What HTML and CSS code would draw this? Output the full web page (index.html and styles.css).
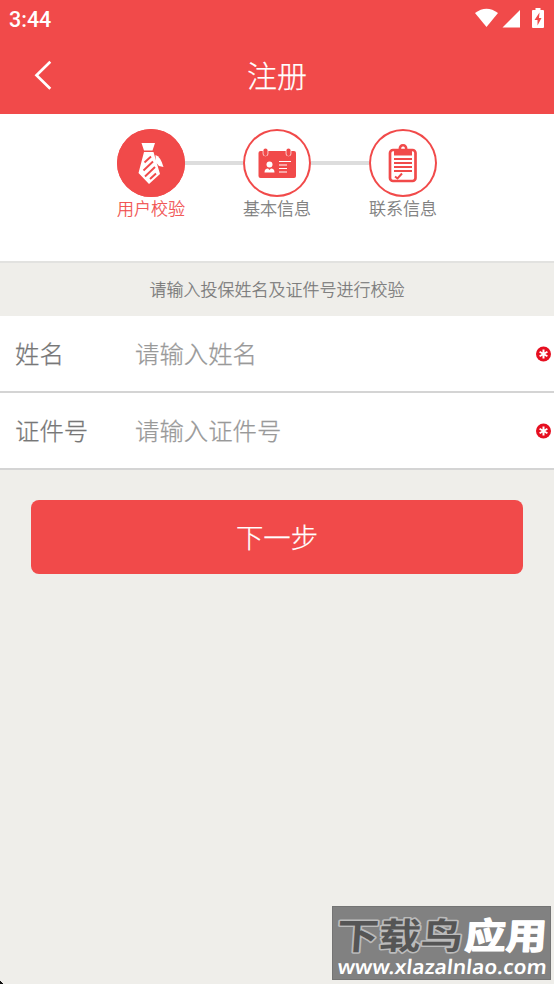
FILE: index.html
```html
<!DOCTYPE html>
<html lang="zh-CN">
<head>
<meta charset="utf-8">
<title>注册</title>
<link rel="stylesheet" href="styles.css">
</head>
<body>
<header class="top">
  <div class="status">
    <span class="clock">3:44</span>
    <svg class="status-icons" width="72" height="22" viewBox="0 0 72 22" fill="#fff">
      <path d="M1 5Q12.500-3.500 24 5L12.500 19Z"/>
      <path d="M46 2V19.500H28.500Z"/>
      <path fill-rule="evenodd" d="M61.500 0h5v2H69q1 0 1 1v16q0 1-1 1H59q-1 0-1-1V3q0-1 1-1h2.500ZM65.500 4.500L60.500 12h3v5.500l4-7.500h-2.500Z"/>
    </svg>
  </div>
  <div class="nav">
    <svg class="back" width="18" height="30" viewBox="0 0 18 30"><path d="M16.300 1.800L2.500 15.300 16.300 28.700" fill="none" stroke="#fff" stroke-width="2.700"/></svg>
    <h1 class="title">注册</h1>
  </div>
</header>
<section class="steps">
  <div class="step active">
    <div class="disc">
      <svg width="68" height="68" viewBox="0 0 68 68">
        <path fill="#fff" d="M24.500 14h13.500l-2.500 7.500h-8.500ZM27 23h9.500l6.500 22-11 10L21.500 44Z"/>
        <path fill="#fff" d="M38.500 26q5 1.500 8 12l-4.500-1-3-3.500Z"/>
        <path d="M27.500 33.500l6.500-6M26.500 41.500l9.500-9M28 47.500l10-9.500M33 50l6-5.500" stroke="#f14a4a" stroke-width="1.900"/>
      </svg>
    </div>
    <span class="caption">用户校验</span>
  </div>
  <div class="link"></div>
  <div class="step">
    <div class="disc">
      <svg width="68" height="68" viewBox="0 0 68 68">
        <rect x="15.500" y="22" width="37.500" height="27" rx="2" fill="#f14a4a"/>
        <path d="M22.500 21v3.500M45.500 21v3.500" stroke="#fff" stroke-width="5.600" stroke-linecap="round"/>
        <path d="M22.500 21.500v3.500M45.500 21.500v3.500" stroke="#f14a4a" stroke-width="4.200" stroke-linecap="round"/>
        <circle cx="26.500" cy="35.500" r="3" fill="#fff"/>
        <path d="M21.500 43.500q0-4 3.500-4l1.500 1.500 1.500-1.500q3.500 0 3.500 4Z" fill="#fff"/>
        <path d="M36 32.500h12M36 36h8M36 39.500h8M36 43h8" stroke="#fff" stroke-width="1"/>
      </svg>
    </div>
    <span class="caption">基本信息</span>
  </div>
  <div class="link"></div>
  <div class="step">
    <div class="disc">
      <svg width="68" height="68" viewBox="0 0 68 68">
        <rect x="21" y="21" width="25.500" height="31" rx="3" fill="none" stroke="#f14a4a" stroke-width="2.700"/>
        <path fill-rule="evenodd" fill="#f14a4a" d="M25 26.500v-4q0-2 2-2h2.500q0-5.500 4.500-5.500t4.500 5.500h2.500q2 0 2 2v4ZM34 17.500a1.900 1.900 0 1 0 .1 0Z"/>
        <path d="M25 30h18M25 34h18M25 38h18M25 42h18" stroke="#f14a4a" stroke-width="1.900"/>
        <path d="M26 47.500l2.500 2 4.500-5" fill="none" stroke="#f14a4a" stroke-width="2"/>
      </svg>
    </div>
    <span class="caption">联系信息</span>
  </div>
</section>
<p class="hint">请输入投保姓名及证件号进行校验</p>
<main>
  <div class="row">
    <span class="label">姓名</span><span class="field">请输入姓名</span>
    <svg class="required" width="16" height="16" viewBox="0 0 16 16"><circle cx="7.500" cy="8" r="7.500" fill="#e60f20"/><path d="M7.500 3.500v9M3.600 5.750l7.800 4.500M3.600 10.250l7.800-4.500" stroke="#fff" stroke-width="2"/></svg>
  </div>
  <div class="row">
    <span class="label">证件号</span><span class="field">请输入证件号</span>
    <svg class="required" width="16" height="16" viewBox="0 0 16 16"><circle cx="7.500" cy="8" r="7.500" fill="#e60f20"/><path d="M7.500 3.500v9M3.600 5.750l7.800 4.500M3.600 10.250l7.800-4.500" stroke="#fff" stroke-width="2"/></svg>
  </div>
  <button class="next"><span>下一步</span></button>
</main>
<div class="corner"></div>
<div class="watermark">
  <svg width="219" height="74" viewBox="0 0 219 74">
    <g class="mark-name" transform="translate(0 43) skewX(-4) scale(1 .9)">
      <text class="mark-dark" x="4" y="0" textLength="126" lengthAdjust="spacingAndGlyphs">下载鸟</text>
      <text class="mark-light" x="132" y="0" textLength="82" lengthAdjust="spacingAndGlyphs">应用</text>
    </g>
    <text class="mark-url" x="0" y="0" transform="translate(5 68) skewX(-6)" textLength="209" lengthAdjust="spacingAndGlyphs">www.xlazalnlao.com</text>
  </svg>
</div>
</body>
</html>
```
FILE: styles.css
```css
* { box-sizing: border-box; }
body {
  margin: 0;
  min-height: 984px;
  background: #efeeea;
  color: #777;
  font-family: "Noto Sans CJK SC", sans-serif;
  font-weight: 300;
  -webkit-text-stroke: 0.25px currentColor;
}
svg { display: block; }
.top { height: 114px; background: #f14a4a; color: #fff; }
.status { height: 38px; display: flex; justify-content: space-between; padding: 8px 8px 0 9px; }
.clock { font: 500 21.5px/23px Roboto, sans-serif; -webkit-text-stroke: 0; }
.nav { height: 76px; display: grid; grid-template-columns: 100px 1fr 100px; align-items: center; }
.back { margin: -3px 0 0 34px; }
.title { margin: -4px 0 0; text-align: center; font-size: 30px; font-weight: 300; line-height: 44px; }
.steps {
  height: 149px;
  display: flex;
  justify-content: center;
  padding-top: 15px;
  background: #fff;
  border-bottom: 2px solid #e2e2e0;
}
.step { width: 68px; display: flex; flex-direction: column; align-items: center; }
.disc { width: 68px; height: 68px; border-radius: 50%; box-shadow: inset 0 0 0 2px #f14a4a; }
.active .disc { background: #f14a4a; }
.caption { font-size: 17px; line-height: 22px; white-space: nowrap; }
.active .caption { color: #f14a4a; }
.link { width: 58px; height: 4px; margin-top: 32px; background: #ddd; }
.hint { margin: 0; height: 53px; line-height: 52px; text-align: center; font-size: 17px; }
.row {
  height: 77px;
  display: flex;
  align-items: center;
  padding: 0 2px 0 15px;
  background: #fff;
  border-bottom: 2px solid #d4d4d4;
  font-size: 24.4px;
}
.label, .field { margin-top: -2px; }
.label { width: 120px; }
.field { flex: 1; color: #999; }
.next {
  display: block;
  width: 492px;
  height: 74px;
  margin: 30px auto 0;
  padding: 0 0 3px;
  border: 0;
  border-radius: 8px;
  background: #f14a4a;
  color: #fff;
  font: 300 27.4px "Noto Sans CJK SC", sans-serif;
  -webkit-text-stroke: 0.25px #fff;
}
.watermark { position: absolute; left: 332px; top: 906px; width: 219px; height: 74px; background: #818181; border: 1px solid #747474; -webkit-text-stroke: 0; }
.watermark svg { margin: -1px; }
.mark-name { font: 700 40px "Noto Sans CJK SC", sans-serif; stroke-linejoin: round; paint-order: stroke; }
.mark-dark { fill: #555; stroke: #bbb; stroke-width: 3.5px; }
.mark-light { fill: #fff; stroke: #fff; stroke-width: 1.5px; }
.mark-url { font: 600 20px "Noto Sans", sans-serif; fill: #fff; }
.corner { position: absolute; left: 0; top: 980px; width: 4px; height: 4px; background: linear-gradient(45deg, #111 45%, transparent 46%); }
```
